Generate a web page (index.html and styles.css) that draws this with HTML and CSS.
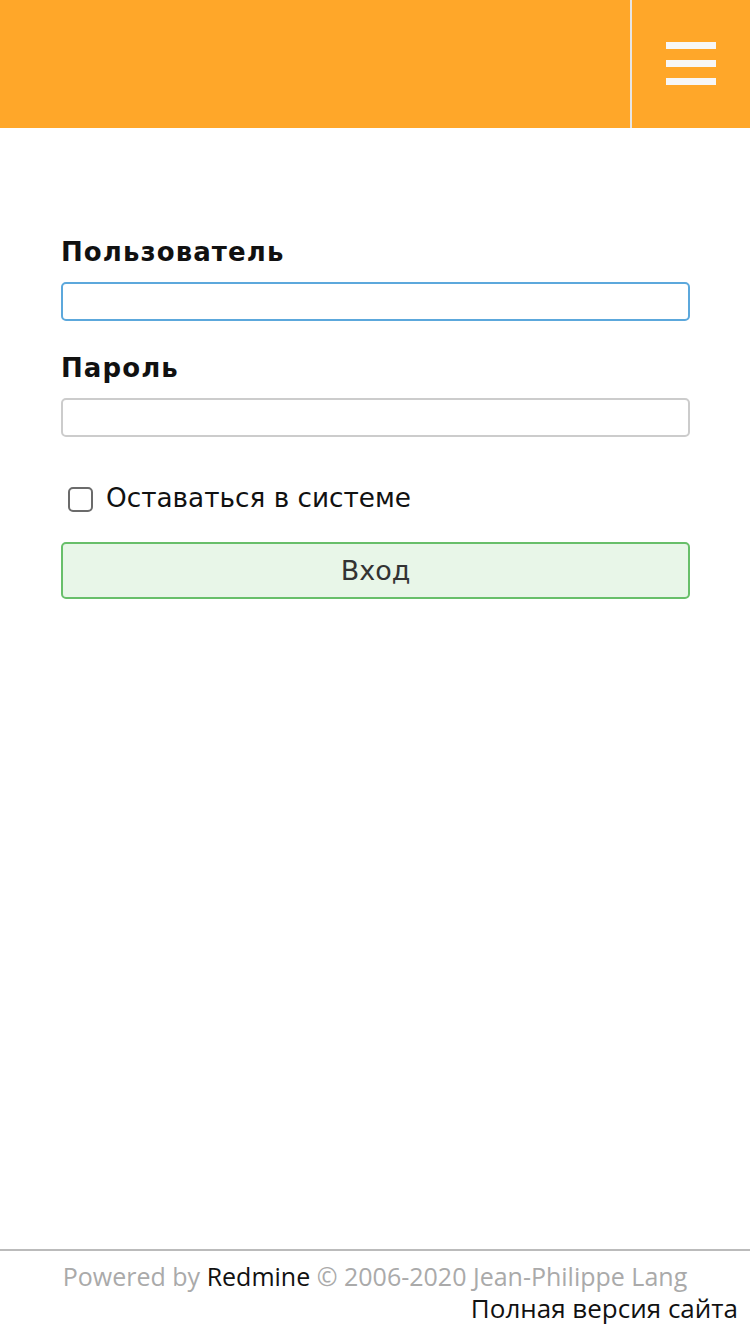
FILE: index.html
```html
<!DOCTYPE html>
<html lang="ru">
<head>
<meta charset="UTF-8">
<meta name="viewport" content="width=device-width, initial-scale=1.0">
<title>Redmine</title>
<link rel="stylesheet" href="styles.css">
</head>
<body>
<div class="page">
    <header class="top">
        <div class="top-space"></div>
        <button class="menu-btn" type="button" aria-label="Меню">
            <span class="bar"></span>
            <span class="bar"></span>
            <span class="bar"></span>
        </button>
    </header>

    <main class="content">
        <form class="login" action="#">
            <label class="field-label" for="username">Пользователь</label>
            <input class="field focus" type="text" id="username" name="username">

            <label class="field-label" for="password">Пароль</label>
            <input class="field" type="password" id="password" name="password">

            <label class="remember" for="autologin">
                <input type="checkbox" id="autologin" name="autologin">
                <span>Оставаться в системе</span>
            </label>

            <button class="submit" type="submit">Вход</button>
        </form>
    </main>

    <footer class="foot">
        <p class="powered">Powered by <a href="#">Redmine</a> &copy; 2006-2020 Jean-Philippe Lang</p>
        <p class="full"><a href="#">Полная версия сайта</a></p>
    </footer>
</div>
</body>
</html>
```

FILE: styles.css
```css
html, body {
    margin: 0;
    padding: 0;
    height: 100%;
}
body {
    font-family: "DejaVu Sans", Verdana, sans-serif;
    background-color: #fff;
    color: #111;
}
.page {
    min-height: 1334px;
    display: flex;
    flex-direction: column;
}
.top {
    height: 128px;
    background-color: #ffa729;
    display: flex;
}
.top-space {
    flex: 1;
    border-right: 2px solid #e6e6e6;
}
.menu-btn {
    width: 118px;
    border: none;
    background: none;
    padding: 42px 0 0 34px;
    display: flex;
    flex-direction: column;
    align-items: flex-start;
    gap: 11px;
    cursor: pointer;
}
.bar {
    display: block;
    width: 50px;
    height: 7px;
    background-color: #f7f7f7;
}
.content {
    flex: 1;
    padding: 106px 60px 0 61px;
}
.login {
    display: flex;
    flex-direction: column;
}
.field-label {
    font-weight: bold;
    font-size: 26px;
    letter-spacing: 1.1px;
    line-height: 36px;
    margin-bottom: 12px;
}
.field {
    height: 39px;
    box-sizing: border-box;
    border: 2px solid #cccccc;
    border-radius: 5px;
    margin-bottom: 29px;
    font-size: 20px;
    padding: 0 8px;
    outline: none;
}
.field.focus {
    border-color: #5ca8dc;
}
.remember {
    display: flex;
    align-items: center;
    gap: 13px;
    font-size: 26.3px;
    margin: 14px 0 26px 7px;
    line-height: 36px;
}
.remember input {
    width: 25px;
    height: 25px;
    margin: 2px 0 0 0;
    appearance: none;
    border: 2px solid #6b6b6b;
    border-radius: 5px;
    background: #fff;
}
.submit {
    height: 57px;
    background-color: #e8f6e8;
    border: 2px solid #68bf6a;
    border-radius: 5px;
    font-family: "DejaVu Sans", Verdana, sans-serif;
    font-size: 27px;
    color: #333;
    cursor: pointer;
}
.foot {
    border-top: 2px solid #bbb;
    padding: 9px 12px 10px;
}
.foot p {
    margin: 0;
}
.powered {
    text-align: center;
    font-family: "Open Sans", sans-serif;
    font-size: 25px;
    color: #aaa;
    line-height: 32px;
}
.powered a {
    color: #111;
    text-decoration: none;
}
.full {
    text-align: right;
    font-family: "Open Sans", sans-serif;
    font-size: 26px;
    line-height: 32px;
}
.full a {
    color: #111;
    text-decoration: none;
}
```
